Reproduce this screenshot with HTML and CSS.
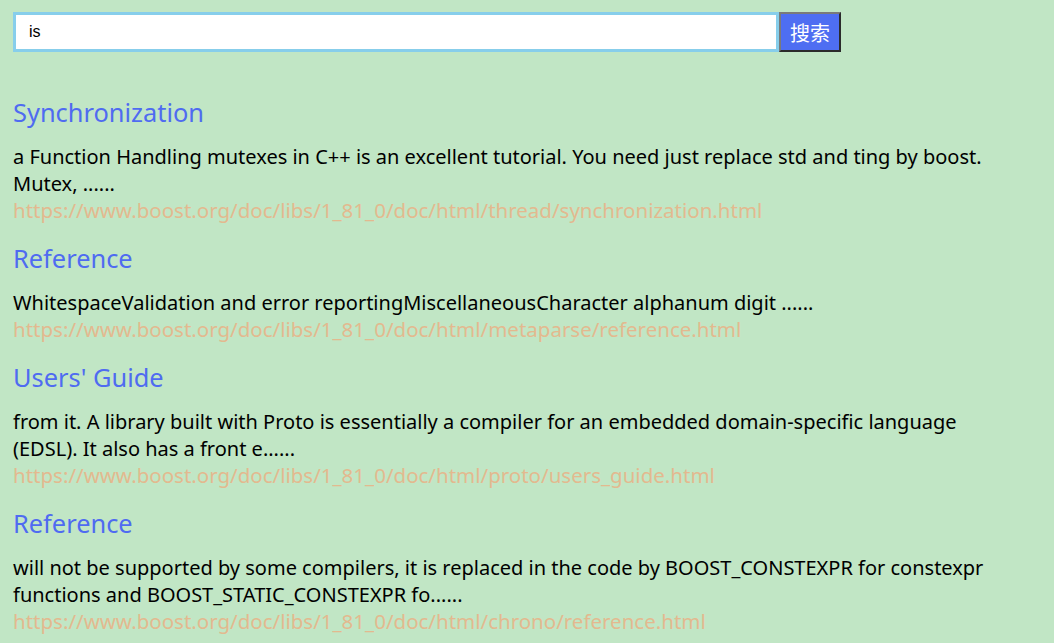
FILE: index.html
```html
<!DOCTYPE html>
<html lang="zh-CN">
<head>
<meta charset="utf-8">
<title>boost 搜索引擎</title>
<link rel="stylesheet" href="styles.css">
</head>
<body>
<div class="container">
  <div class="search">
    <input class="search-input" type="text" value="is">
    <button class="search-btn">搜索</button>
  </div>
  <div class="result">
    <div class="item">
      <a class="title" href="#">Synchronization</a>
      <p class="desc">a Function Handling mutexes in C++ is an excellent tutorial. You need just replace std and ting by boost. Mutex, ......</p>
      <i class="url">https://www.boost.org/doc/libs/1_81_0/doc/html/thread/synchronization.html</i>
    </div>
    <div class="item">
      <a class="title" href="#">Reference</a>
      <p class="desc">WhitespaceValidation and error reportingMiscellaneousCharacter alphanum digit ......</p>
      <i class="url">https://www.boost.org/doc/libs/1_81_0/doc/html/metaparse/reference.html</i>
    </div>
    <div class="item">
      <a class="title" href="#">Users' Guide</a>
      <p class="desc">from it. A library built with Proto is essentially a compiler for an embedded domain-specific language (EDSL). It also has a front e......</p>
      <i class="url">https://www.boost.org/doc/libs/1_81_0/doc/html/proto/users_guide.html</i>
    </div>
    <div class="item">
      <a class="title" href="#">Reference</a>
      <p class="desc">will not be supported by some compilers, it is replaced in the code by BOOST_CONSTEXPR for constexpr functions and BOOST_STATIC_CONSTEXPR fo......</p>
      <i class="url">https://www.boost.org/doc/libs/1_81_0/doc/html/chrono/reference.html</i>
    </div>
  </div>
</div>
</body>
</html>
```
FILE: styles.css
```css
* {
  box-sizing: border-box;
}

html, body {
  margin: 0;
  padding: 0;
  background: #c1e6c5;
  height: 100%;
}

body {
  font-family: "Noto Sans", "Noto Sans CJK SC", sans-serif;
  overflow: hidden;
}

.container {
  padding: 12px 13px 0 13px;
  width: 1026px;
}

.search {
  display: flex;
  height: 40px;
}

.search-input {
  width: 766px;
  height: 40px;
  border: 3px solid #87ceeb;
  padding: 0 0 0 13px;
  margin: 0;
  font-family: "Liberation Sans", Arial, sans-serif;
  font-size: 16px;
  color: #000;
  background: #fff;
  outline: none;
}

.search-btn {
  width: 62px;
  height: 40px;
  margin: 0;
  padding: 0;
  background: #4e6ef2;
  color: #fff;
  font-family: "Noto Sans CJK SC", sans-serif;
  font-size: 20px;
  border-style: solid;
  border-width: 2px;
  border-color: #7a7a7a #2b2b2b #2b2b2b #7a7a7a;
}

.result {
  margin-top: 43px;
}

.item {
  margin-bottom: 18px;
}

.title {
  display: block;
  font-size: 25.4px;
  line-height: 34px;
  color: #4f6bf1;
  text-decoration: none;
}

.desc {
  margin: 14px 0 0 0;
  font-size: 20px;
  line-height: 27px;
  color: #000;
}

.url {
  display: block;
  font-style: normal;
  font-size: 20.5px;
  line-height: 26px;
  color: #e3b98f;
}
```
